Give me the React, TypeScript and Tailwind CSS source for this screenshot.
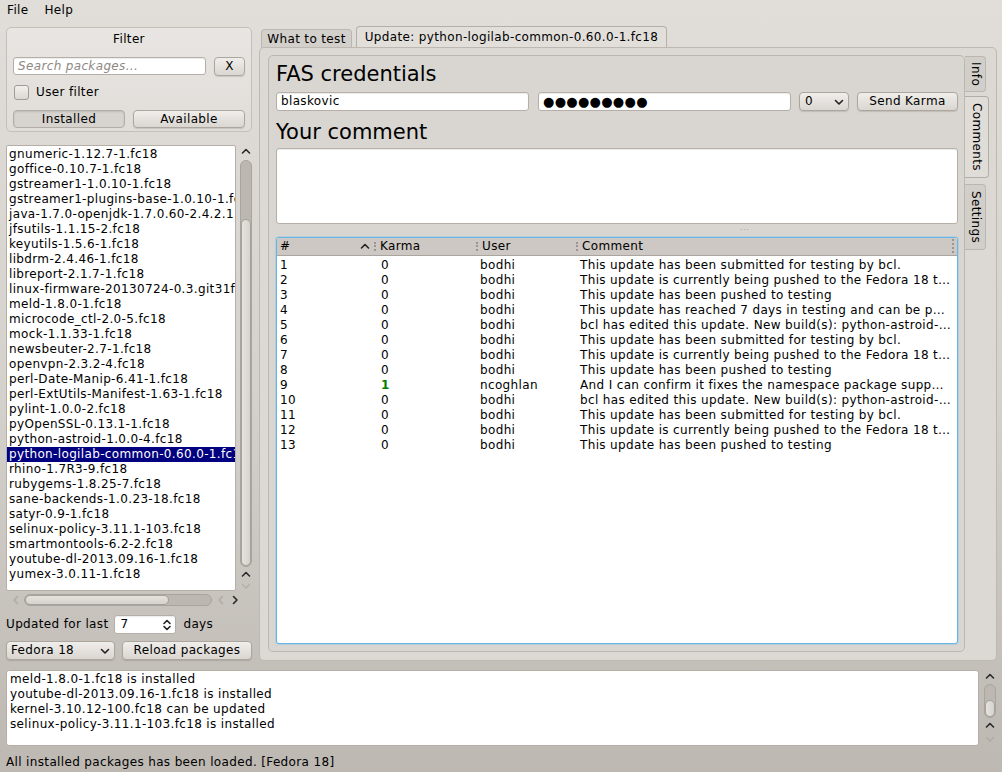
import React from 'react';

// ---------------------------------------------------------------------------
// Data
// ---------------------------------------------------------------------------

const PACKAGES = [
  'gnumeric-1.12.7-1.fc18',
  'goffice-0.10.7-1.fc18',
  'gstreamer1-1.0.10-1.fc18',
  'gstreamer1-plugins-base-1.0.10-1.fc18',
  'java-1.7.0-openjdk-1.7.0.60-2.4.2.1.fc18',
  'jfsutils-1.1.15-2.fc18',
  'keyutils-1.5.6-1.fc18',
  'libdrm-2.4.46-1.fc18',
  'libreport-2.1.7-1.fc18',
  'linux-firmware-20130724-0.3.git31f6b30.fc18',
  'meld-1.8.0-1.fc18',
  'microcode_ctl-2.0-5.fc18',
  'mock-1.1.33-1.fc18',
  'newsbeuter-2.7-1.fc18',
  'openvpn-2.3.2-4.fc18',
  'perl-Date-Manip-6.41-1.fc18',
  'perl-ExtUtils-Manifest-1.63-1.fc18',
  'pylint-1.0.0-2.fc18',
  'pyOpenSSL-0.13.1-1.fc18',
  'python-astroid-1.0.0-4.fc18',
  'python-logilab-common-0.60.0-1.fc18',
  'rhino-1.7R3-9.fc18',
  'rubygems-1.8.25-7.fc18',
  'sane-backends-1.0.23-18.fc18',
  'satyr-0.9-1.fc18',
  'selinux-policy-3.11.1-103.fc18',
  'smartmontools-6.2-2.fc18',
  'youtube-dl-2013.09.16-1.fc18',
  'yumex-3.0.11-1.fc18',
];

const SELECTED = 'python-logilab-common-0.60.0-1.fc18';

const SUBMITTED = 'This update has been submitted for testing by bcl.';
const PUSHING = 'This update is currently being pushed to the Fedora 18 t…';
const PUSHED = 'This update has been pushed to testing';
const EDITED = 'bcl has edited this update. New build(s): python-astroid-…';

const COMMENTS: { karma: number; user: string; text: string }[] = [
  { karma: 0, user: 'bodhi', text: SUBMITTED },
  { karma: 0, user: 'bodhi', text: PUSHING },
  { karma: 0, user: 'bodhi', text: PUSHED },
  { karma: 0, user: 'bodhi', text: 'This update has reached 7 days in testing and can be p…' },
  { karma: 0, user: 'bodhi', text: EDITED },
  { karma: 0, user: 'bodhi', text: SUBMITTED },
  { karma: 0, user: 'bodhi', text: PUSHING },
  { karma: 0, user: 'bodhi', text: PUSHED },
  { karma: 1, user: 'ncoghlan', text: 'And I can confirm it fixes the namespace package supp…' },
  { karma: 0, user: 'bodhi', text: EDITED },
  { karma: 0, user: 'bodhi', text: SUBMITTED },
  { karma: 0, user: 'bodhi', text: PUSHING },
  { karma: 0, user: 'bodhi', text: PUSHED },
];

const LOG = [
  'meld-1.8.0-1.fc18 is installed',
  'youtube-dl-2013.09.16-1.fc18 is installed',
  'kernel-3.10.12-100.fc18 can be updated',
  'selinux-policy-3.11.1-103.fc18 is installed',
];

// ---------------------------------------------------------------------------
// Small widgets
// ---------------------------------------------------------------------------

const BTN =
  'flex items-center rounded-[4px] border border-[#aca69f] bg-linear-to-b from-[#f0eeeb] to-[#dad6d1] shadow-[0_1px_1px_rgba(0,0,0,0.12)]';

const FIELD =
  'rounded-[3px] border border-[#b5afa8] bg-white shadow-[inset_0_1px_1px_rgba(0,0,0,0.08)]';

function Chevron({ dir, className = '' }: { dir: 'up' | 'down' | 'left' | 'right'; className?: string }) {
  const d = {
    up: 'M1.5 6 L5 2.5 L8.5 6',
    down: 'M1.5 3.5 L5 7 L8.5 3.5',
    left: 'M6.5 1.5 L3 5 L6.5 8.5',
    right: 'M3.5 1.5 L7 5 L3.5 8.5',
  }[dir];
  return (
    <svg width="10" height="10" viewBox="0 0 10 10" className={`shrink-0 ${className}`}>
      <path d={d} fill="none" stroke="currentColor" strokeWidth="1.6" strokeLinecap="round" strokeLinejoin="round" />
    </svg>
  );
}

function Grip() {
  return <span className="h-[9px] w-0 shrink-0 border-l-[2px] border-dotted border-[#9b958f]" />;
}

// ---------------------------------------------------------------------------
// Left column
// ---------------------------------------------------------------------------

function FilterBox() {
  return (
    <div className="h-[105px] rounded-[5px] border border-[#c4bfb9] bg-linear-to-b from-[#e8e5e2] to-[#e0ddd9] px-[6px] pt-[2px]">
      <div className="h-[18px] text-center leading-[18px]">Filter</div>
      <div className="mt-[9px] flex h-[19px] items-start gap-[8px]">
        <div className={`${FIELD} flex h-[18px] w-[193px] items-center pl-[4px] italic text-[#8d8882]`}>
          Search packages...
        </div>
        <div className={`${BTN} h-[19px] w-[31px] justify-center`}>X</div>
      </div>
      <div className="mt-[9px] flex h-[15px] items-center gap-[7px] pl-[1px]">
        <span className="h-[15px] w-[15px] rounded-[3px] border border-[#a19b95] bg-linear-to-b from-[#f2f0ed] to-[#dcd8d3]" />
        <span>User filter</span>
      </div>
      <div className="mt-[10px] flex gap-[8px]">
        <div className="flex h-[18px] w-[112px] items-center justify-center rounded-[4px] border border-[#b3ada7] bg-[#d7d3ce] shadow-[inset_0_1px_2px_rgba(0,0,0,0.12)]">
          Installed
        </div>
        <div className={`${BTN} h-[18px] w-[112px] justify-center`}>Available</div>
      </div>
    </div>
  );
}

function PackageList() {
  return (
    <div className="mt-[13px] flex h-[446px] gap-[3px]">
      <div className="h-full w-[230px] overflow-hidden rounded-[2px] border border-[#b5afa8] bg-white pt-[1px]">
        {PACKAGES.map((p) => (
          <div
            key={p}
            className={`h-[15px] overflow-hidden whitespace-nowrap pl-[2px] leading-[15px] ${
              p === SELECTED ? 'bg-[#000080] text-white' : ''
            }`}
          >
            {p}
          </div>
        ))}
      </div>
      {/* vertical scrollbar */}
      <div className="flex w-[13px] flex-col items-center">
        <Chevron dir="up" className="mt-[2px] text-[#2a2a2a]" />
        <div className="mt-[3px] flex h-[410px] w-[12px] flex-col rounded-[6px] border border-[#aaa49e] bg-[#bcb7b1]">
          <div className="h-[58px]" />
          <div className="flex-1 rounded-[5px] border border-[#a7a19b] bg-linear-to-r from-[#e6e3df] to-[#d6d2cd]" />
        </div>
        <Chevron dir="up" className="mt-[3px] text-[#2a2a2a]" />
        <Chevron dir="down" className="mt-[1px] text-[#b5b0aa]" />
      </div>
    </div>
  );
}

function HScroll() {
  return (
    <div className="mt-[3px] flex h-[12px] items-center">
      <Chevron dir="left" className="ml-[5px] text-[#b0aba5]" />
      <div className="ml-[3px] flex h-[12px] w-[188px] rounded-[6px] border border-[#aaa49e] bg-[#bcb7b1]">
        <div className="w-[144px] rounded-[5px] border border-[#a7a19b] bg-linear-to-b from-[#e6e3df] to-[#d6d2cd]" />
      </div>
      <Chevron dir="left" className="ml-[4px] text-[#b0aba5]" />
      <Chevron dir="right" className="ml-[4px] text-[#2a2a2a]" />
    </div>
  );
}

function LeftColumn() {
  return (
    <div className="flex w-[246px] flex-col pt-[7px]">
      <FilterBox />
      <PackageList />
      <HScroll />
      <div className="mt-[9px] flex h-[19px] items-center">
        <span>Updated for last</span>
        <div className={`${FIELD} ml-[6px] flex h-[19px] w-[62px] items-center justify-between pl-[5px] pr-[3px]`}>
          <span>7</span>
          <svg width="10" height="14" viewBox="0 0 10 14">
            <path d="M2 5.5 L5 2.5 L8 5.5 M2 8.5 L5 11.5 L8 8.5" fill="none" stroke="#222" strokeWidth="1.6" strokeLinecap="round" strokeLinejoin="round" />
          </svg>
        </div>
        <span className="ml-[7px]">days</span>
      </div>
      <div className="mt-[7px] flex h-[19px] gap-[7px]">
        <div className={`${BTN} h-[19px] w-[109px] justify-between pl-[4px] pr-[4px]`}>
          <span>Fedora 18</span>
          <Chevron dir="down" className="text-[#222]" />
        </div>
        <div className={`${BTN} h-[19px] w-[130px] justify-center`}>Reload packages</div>
      </div>
    </div>
  );
}

// ---------------------------------------------------------------------------
// Right column
// ---------------------------------------------------------------------------

function CommentsTable() {
  return (
    <div className="h-[407px] overflow-hidden rounded-[3px] border border-[#66b5e3] bg-white shadow-[0_0_0_1px_rgba(120,190,235,0.35)]">
      <div className="flex h-[18px] items-center border-b border-[#aba59f] bg-[#cdc8c3]">
        <div className="flex w-[97px] items-center justify-between pl-[3px] pr-[4px]">
          <span>#</span>
          <Chevron dir="up" className="text-[#222]" />
        </div>
        <div className="flex w-[102px] items-center gap-[4px]">
          <Grip />
          <span>Karma</span>
        </div>
        <div className="flex w-[100px] items-center gap-[4px]">
          <Grip />
          <span>User</span>
        </div>
        <div className="flex flex-1 items-center gap-[4px]">
          <Grip />
          <span className="flex-1">Comment</span>
          <span className="mr-[3px]">
            <Grip />
          </span>
        </div>
      </div>
      <div className="pt-[2px]">
        {COMMENTS.map((c, i) => (
          <div key={i} className="flex h-[15px] items-center whitespace-nowrap leading-[15px]">
            <span className="w-[97px] pl-[3px]">{i + 1}</span>
            <span className={`w-[102px] pl-[7px] ${c.karma > 0 ? 'font-bold text-[#008000]' : ''}`}>
              {c.karma}
            </span>
            <span className="w-[100px] pl-[4px]">{c.user}</span>
            <span className="flex-1 overflow-hidden pl-[4px]">{c.text}</span>
          </div>
        ))}
      </div>
    </div>
  );
}

function SideTab({ label, active, h }: { label: string; active?: boolean; h: string }) {
  return (
    <div
      className={`flex items-center justify-center rounded-r-[4px] border border-l-0 [writing-mode:vertical-rl] ${h} ${
        active
          ? 'w-[24px] border-[#b3ada7] bg-[#e0ddd9]'
          : 'w-[21px] border-[#bcb6b0] bg-[#d2cec9]'
      }`}
    >
      {label}
    </div>
  );
}

function UpdatePane() {
  return (
    <div className="-mt-[1px] flex h-[614px] rounded-[5px] border border-[#bdb8b2] bg-[#dcd9d5] pl-[8px] pt-[7px] pb-[8px]">
      {/* inner pane */}
      <div className="flex h-[597px] w-[697px] flex-col rounded-[5px] border border-[#bcb7b1] bg-[#d9d6d2] pl-[7px] pr-[6px] pt-[7px]">
        <div className="h-[23px] text-[21px] leading-[23px] tracking-normal">FAS credentials</div>
        <div className="mt-[6px] flex h-[19px] items-start">
          <div className={`${FIELD} flex h-[19px] w-[253px] items-center pl-[4px]`}>blaskovic</div>
          <div className={`${FIELD} ml-[9px] flex h-[19px] w-[253px] items-center pl-[4px] text-[13px] tracking-[0.3px]`}>
            ●●●●●●●●●
          </div>
          <div className={`${BTN} ml-[8px] h-[19px] w-[50px] justify-between pl-[5px] pr-[4px]`}>
            <span>0</span>
            <Chevron dir="down" className="text-[#222]" />
          </div>
          <div className={`${BTN} ml-[8px] h-[19px] w-[101px] justify-center`}>Send Karma</div>
        </div>
        <div className="mt-[10px] h-[23px] text-[21px] leading-[23px] tracking-normal">Your comment</div>
        <div className={`${FIELD} mt-[4px] h-[76px] w-[682px]`} />
        <div className="flex h-[13px] items-center pl-[464px]">
          <span className="text-[7px] leading-none tracking-[1px] text-[#8f8a84]">···</span>
        </div>
        <div className="w-[682px]">
          <CommentsTable />
        </div>
      </div>
      {/* vertical tabs */}
      <div className="flex flex-col pt-[1px]">
        <SideTab label="Info" h="h-[36px]" />
        <div className="mt-[4px]" />
        <SideTab label="Comments" active h="h-[82px]" />
        <div className="mt-[6px]" />
        <SideTab label="Settings" h="h-[66px]" />
      </div>
    </div>
  );
}

function RightColumn() {
  return (
    <div className="ml-[7px] flex w-[738px] flex-col pt-[6px]">
      <div className="flex h-[22px] items-end pl-[2px]">
        <div className="flex h-[19px] w-[91px] items-center justify-center rounded-t-[4px] border border-b-0 border-[#bcb6b0] bg-[#d3cfca]">
          What to test
        </div>
        <div className="ml-[4px] flex h-[22px] w-[311px] items-center justify-center whitespace-nowrap rounded-t-[4px] border border-b-0 border-[#b5afa9] bg-[#e2dfdb]">
          Update: python-logilab-common-0.60.0-1.fc18
        </div>
      </div>
      <UpdatePane />
    </div>
  );
}

// ---------------------------------------------------------------------------
// App
// ---------------------------------------------------------------------------

export default function App() {
  return (
    <div className="flex h-[772px] w-[1002px] flex-col overflow-hidden bg-linear-to-b from-[#e1deda] via-[#d5d1cc] to-[#bdb8b2] font-['DejaVu_Sans',sans-serif] text-[12px] leading-[15px] tracking-[0.35px] text-black">
      {/* Menu bar */}
      <div className="flex h-[20px] items-center gap-[16px] pl-[7px]">
        <span>File</span>
        <span>Help</span>
      </div>

      {/* Main */}
      <div className="flex h-[644px] pl-[6px]">
        <LeftColumn />
        <RightColumn />
      </div>

      {/* Log */}
      <div className="mt-[6px] flex h-[76px] pl-[6px]">
        <div className="h-[76px] w-[973px] rounded-[3px] border border-[#b5afa8] bg-white pl-[3px] pt-[1px]">
          {LOG.map((l) => (
            <div key={l} className="h-[15px] leading-[15px]">
              {l}
            </div>
          ))}
        </div>
        <div className="ml-[4px] flex w-[14px] flex-col items-center">
          <Chevron dir="up" className="mt-[2px] text-[#2a2a2a]" />
          <div className="mt-[2px] flex h-[34px] w-[12px] flex-col rounded-[6px] border border-[#aaa49e] bg-[#bcb7b1]">
            <div className="h-[15px]" />
            <div className="flex-1 rounded-[5px] border border-[#a7a19b] bg-linear-to-r from-[#e6e3df] to-[#d6d2cd]" />
          </div>
          <Chevron dir="up" className="mt-[3px] text-[#2a2a2a]" />
          <Chevron dir="down" className="mt-[3px] text-[#b0aba5]" />
        </div>
      </div>

      {/* Status bar */}
      <div className="mt-[9px] pl-[6px]">All installed packages has been loaded. [Fedora 18]</div>
    </div>
  );
}
